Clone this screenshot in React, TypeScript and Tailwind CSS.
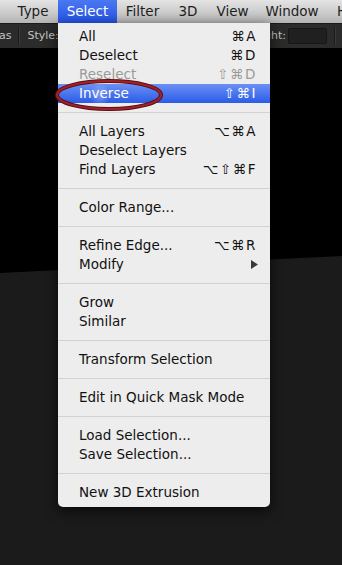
import { ReactNode } from 'react'

type Item = { label: string; keys?: string; disabled?: boolean; active?: boolean; submenu?: boolean }

const groups: Item[][] = [
  [
    { label: 'All', keys: '⌘A' },
    { label: 'Deselect', keys: '⌘D' },
    { label: 'Reselect', keys: '⇧⌘D', disabled: true },
    { label: 'Inverse', keys: '⇧⌘I', active: true },
  ],
  [
    { label: 'All Layers', keys: '⌥⌘A' },
    { label: 'Deselect Layers' },
    { label: 'Find Layers', keys: '⌥⇧⌘F' },
  ],
  [{ label: 'Color Range...' }],
  [
    { label: 'Refine Edge...', keys: '⌥⌘R' },
    { label: 'Modify', submenu: true },
  ],
  [{ label: 'Grow' }, { label: 'Similar' }],
  [{ label: 'Transform Selection' }],
  [{ label: 'Edit in Quick Mask Mode' }],
  [{ label: 'Load Selection...' }, { label: 'Save Selection...' }],
  [{ label: 'New 3D Extrusion' }],
]

const menubar = [
  { label: 'Type', w: 'w-[50px]' },
  { label: 'Select', w: 'w-[59px]', open: true },
  { label: 'Filter', w: 'w-[51px]' },
  { label: '3D', w: 'w-[40px]' },
  { label: 'View', w: 'w-[49px]' },
  { label: 'Window', w: 'w-[70px]' },
  { label: 'H', w: 'w-[30px]' },
]

function MenuRow({ item }: { item: Item }) {
  const color = item.active ? 'text-white' : item.disabled ? 'text-[#9a9a9a]' : 'text-[#111]'
  return (
    <div
      className={`flex h-[19px] items-center justify-between pl-[21px] pr-[13px] ${color} ${
        item.active ? 'bg-[linear-gradient(#6b8ff3,#2a5ce8)]' : ''
      }`}
    >
      <span>{item.label}</span>
      {item.keys ? <span className="tracking-[1.5px]">{item.keys}</span> : null}
      {item.submenu ? (
        <svg width="7" height="9" viewBox="0 0 7 9" className="mr-[-1px]">
          <path d="M0 0 L7 4.5 L0 9 Z" fill="#3a3a3a" />
        </svg>
      ) : null}
    </div>
  )
}

function Separator() {
  return (
    <div className="flex h-[19px] items-center">
      <div className="h-px w-full bg-[#d2d2d2]" />
    </div>
  )
}

function Divider() {
  return <div className="mx-[7px] h-[18px] w-px bg-[#1a1a1a] shadow-[1px_0_0_#3a3a3a]" />
}

function Options({ children }: { children: ReactNode }) {
  return (
    <div className="flex h-[25px] items-center border-t border-[#1a1a1a] bg-[#2b2b2b] text-[11px] text-[#c4c4c4]">
      {children}
    </div>
  )
}

export default function App() {
  return (
    <div className="relative flex h-[565px] w-[342px] flex-col overflow-hidden bg-black font-['DejaVu_Sans',sans-serif]">
      {/* menu bar */}
      <div className="flex h-[23px] items-stretch bg-[linear-gradient(#e4e4e4,#c9c9c9_60%,#b4b4b4)] pl-[8px] text-[13.5px] text-[#1e1e1e]">
        {menubar.map((m) => (
          <div
            key={m.label}
            className={`flex shrink-0 items-center justify-center ${m.w} ${
              m.open ? 'bg-[linear-gradient(#4b78f2,#2354e4)] text-white' : ''
            }`}
          >
            {m.label}
          </div>
        ))}
      </div>

      {/* options bar */}
      <Options>
        <span className="ml-[-1px]">as</span>
        <Divider />
        <span className="ml-[1px]">Style:</span>
        <div className="flex-1" />
        <span>ght:</span>
        <div className="ml-[2px] h-[16px] w-[39px] rounded-[2px] border border-[#161616] bg-[#202020]" />
        <Divider />
      </Options>

      {/* canvas */}
      <div className="relative flex-1 bg-black">
        <div className="h-full w-full bg-[#1b1b1b] [clip-path:polygon(0_225px,100%_208px,100%_100%,0_100%)]" />
      </div>

      {/* open Select menu */}
      <div className="absolute left-[58px] top-[23px] w-[212px] rounded-b-[5px] bg-[#ededed] pb-[5px] pt-[4px] text-[13.5px] shadow-[0_4px_14px_rgba(0,0,0,0.7)]">
        {groups.map((g, i) => (
          <div key={i}>
            {i > 0 ? <Separator /> : null}
            {g.map((item) => (
              <MenuRow key={item.label} item={item} />
            ))}
          </div>
        ))}

        {/* red circle drawn around Inverse */}
        <svg width="112" height="34" viewBox="0 0 112 34" className="absolute left-[-5px] top-[55px]">
          <defs>
            <radialGradient id="glint" cx="0.5" cy="0.5" r="0.5">
              <stop offset="0" stopColor="#ffffff" stopOpacity="0.28" />
              <stop offset="1" stopColor="#ffffff" stopOpacity="0" />
            </radialGradient>
          </defs>
          <ellipse cx="47" cy="17" rx="10" ry="13" fill="url(#glint)" />
          <ellipse cx="56" cy="17" rx="52" ry="14" fill="none" stroke="#5e0d12" strokeWidth="4" />
          <ellipse cx="56" cy="17" rx="52" ry="14" fill="none" stroke="#a1232a" strokeWidth="2" />
        </svg>
      </div>
    </div>
  )
}
